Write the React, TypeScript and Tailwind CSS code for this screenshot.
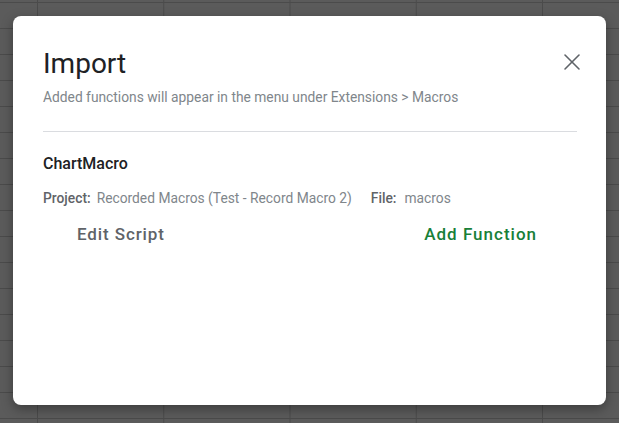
import { X } from 'lucide-react';

export default function App() {
  return (
    <div
      className="h-[423px] w-[619px] overflow-hidden bg-[#5b5b5b] bg-[linear-gradient(to_right,#4b4b4b_1px,transparent_1px),linear-gradient(to_bottom,#4b4b4b_1px,transparent_1px)] bg-[size:126.25px_26px] bg-[position:37px_2px] pt-4 pl-[13px]"
      style={{ fontFamily: 'Roboto, "Liberation Sans", sans-serif' }}
    >
      <div className="flex h-[389px] w-[593px] flex-col rounded-lg bg-white pl-[30px] pr-[29px] shadow-[0_4px_12px_rgba(0,0,0,0.35)]">
        {/* Header: title, subtitle and close button */}
        <div className="flex items-start justify-between pt-[30px]">
          <div>
            <h1 className="text-[28px] leading-9 text-[#202124]">Import</h1>
            <p className="mt-[5px] text-[13.8px] leading-5 text-[#80868b]">
              Added functions will appear in the menu under Extensions &gt; Macros
            </p>
          </div>
          <button className="mt-[2px] mr-[-9px] text-[#5f6368]">
            <X size={28} strokeWidth={1.3} />
          </button>
        </div>

        <div className="mt-[24px] h-px bg-[#dadce0]" />

        {/* Macro entry */}
        <div className="pt-[22px]">
          <div className="text-[16px] font-medium leading-5 text-[#202124]">ChartMacro</div>
          <div className="mt-[14px] flex text-[13.8px] leading-5 text-[#5f6368]">
            <span className="font-medium">Project:</span>
            <span className="ml-[6px] text-[#80868b]">Recorded Macros (Test - Record Macro 2)</span>
            <span className="ml-[19px] font-medium">File:</span>
            <span className="ml-[8px] text-[#80868b]">macros</span>
          </div>
          <div className="mt-[14px] flex justify-between pl-[34px] pr-[40px] text-[17px] font-medium leading-6">
            <button className="tracking-[0.9px] text-[#5f6368]">Edit Script</button>
            <button className="tracking-[1px] text-[#188038]">Add Function</button>
          </div>
        </div>
      </div>
    </div>
  );
}
